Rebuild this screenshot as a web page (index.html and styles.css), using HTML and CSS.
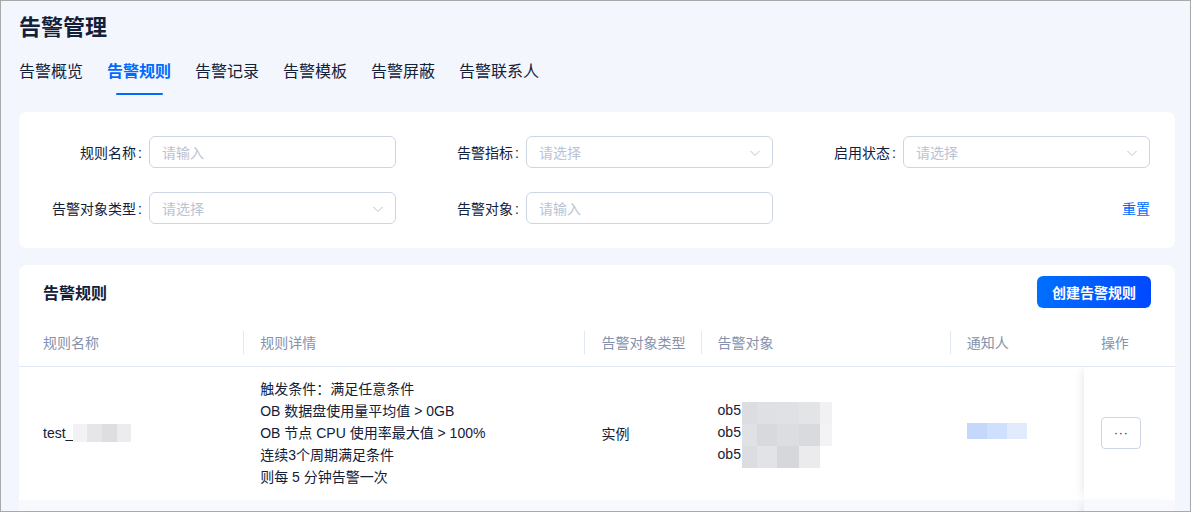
FILE: index.html
```html
<!DOCTYPE html>
<html lang="zh-CN">
<head>
<meta charset="utf-8">
<title>告警管理</title>
<link rel="stylesheet" href="styles.css">
</head>
<body>
<div class="frame">
  <header class="page-head">
    <h1 class="page-title">告警管理</h1>
    <nav class="tabs">
      <a class="tab">告警概览</a>
      <a class="tab active">告警规则</a>
      <a class="tab">告警记录</a>
      <a class="tab">告警模板</a>
      <a class="tab">告警屏蔽</a>
      <a class="tab">告警联系人</a>
    </nav>
  </header>

  <section class="card filter">
    <div class="field">
      <label class="field-label">规则名称</label>
      <div class="control"><span class="placeholder">请输入</span></div>
    </div>
    <div class="field">
      <label class="field-label">告警指标</label>
      <div class="control select"><span class="placeholder">请选择</span>
        <svg class="arrow" viewBox="0 0 12 12"><path d="M1.5 4l4.5 4.5L10.5 4" fill="none" stroke="currentColor" stroke-width="1"/></svg>
      </div>
    </div>
    <div class="field">
      <label class="field-label">启用状态</label>
      <div class="control select"><span class="placeholder">请选择</span>
        <svg class="arrow" viewBox="0 0 12 12"><path d="M1.5 4l4.5 4.5L10.5 4" fill="none" stroke="currentColor" stroke-width="1"/></svg>
      </div>
    </div>
    <div class="field">
      <label class="field-label">告警对象类型</label>
      <div class="control select"><span class="placeholder">请选择</span>
        <svg class="arrow" viewBox="0 0 12 12"><path d="M1.5 4l4.5 4.5L10.5 4" fill="none" stroke="currentColor" stroke-width="1"/></svg>
      </div>
    </div>
    <div class="field">
      <label class="field-label">告警对象</label>
      <div class="control"><span class="placeholder">请输入</span></div>
    </div>
    <div class="field actions">
      <a class="link">重置</a>
    </div>
  </section>

  <section class="card rules">
    <div class="rules-head">
      <h2 class="rules-title">告警规则</h2>
      <button class="btn-primary">创建告警规则</button>
    </div>
    <table class="table">
      <colgroup>
        <col class="c-name"><col class="c-detail"><col class="c-type"><col class="c-target"><col class="c-notify"><col class="c-op">
      </colgroup>
      <thead>
        <tr>
          <th class="first sep">规则名称</th>
          <th class="sep">规则详情</th>
          <th class="sep">告警对象类型</th>
          <th class="sep">告警对象</th>
          <th>通知人</th>
          <th class="op">操作</th>
        </tr>
      </thead>
      <tbody>
        <tr>
          <td class="first">
            <span class="name">test_<span class="mosaic m-name"><i></i><i></i><i></i><i></i></span></span>
          </td>
          <td>
            <div class="detail">
              <div>触发条件：满足任意条件</div>
              <div>OB 数据盘使用量平均值 &gt; 0GB</div>
              <div>OB 节点 CPU 使用率最大值 &gt; 100%</div>
              <div>连续3个周期满足条件</div>
              <div>则每 5 分钟告警一次</div>
            </div>
          </td>
          <td>实例</td>
          <td>
            <div class="targets">
              <div class="target">ob5<span class="mosaic m-a"><i></i><i></i><i></i><i></i><i></i></span></div>
              <div class="target">ob5<span class="mosaic m-b"><i></i><i></i><i></i><i></i><i></i></span></div>
              <div class="target">ob5<span class="mosaic m-c"><i></i><i></i><i></i><i></i></span></div>
            </div>
          </td>
          <td><span class="mosaic m-user"><i></i><i></i><i></i></span></td>
          <td class="op"><button class="btn-more">···</button></td>
        </tr>
        <tr class="stub">
          <td class="first"></td><td></td><td></td><td></td><td></td><td class="op"></td>
        </tr>
      </tbody>
    </table>
  </section>
</div>
</body>
</html>
```

FILE: styles.css
```css
* { box-sizing: border-box; }

html, body {
  margin: 0;
  padding: 0;
}

body {
  font-family: "Liberation Sans", "Noto Sans CJK SC", sans-serif;
  color: #132039;
  font-size: 14px;
}

.frame {
  width: 1191px;
  height: 512px;
  overflow: hidden;
  border: 1px solid #a9a9a9;
  background: #f3f6fc;
  padding: 0 15px 0 18px;
}

/* page header */
.page-head {
  padding-top: 11px;
}

.page-title {
  margin: 0;
  font-size: 22px;
  line-height: 32px;
  font-weight: 700;
  color: #132039;
}

.tabs {
  display: flex;
  gap: 24px;
  margin-top: 16px;
  height: 45px;
}

.tab {
  position: relative;
  font-size: 16px;
  line-height: 24px;
  color: #132039;
  cursor: pointer;
}

.tab.active {
  color: #006aff;
  font-weight: 700;
}

.tab.active::after {
  content: "";
  position: absolute;
  left: 9px;
  right: 8px;
  top: 33px;
  height: 2px;
  background: #006aff;
  border-radius: 1px;
}

/* cards */
.card {
  background: #fff;
  border-radius: 8px;
  margin-top: 7px;
}

.filter {
  display: grid;
  grid-template-columns: repeat(3, 353px);
  column-gap: 24px;
  row-gap: 24px;
  padding: 24px;
}

.field {
  display: grid;
  grid-template-columns: 106px 1fr;
  align-items: center;
  height: 32px;
}

.field-label {
  text-align: right;
  padding-right: 7px;
  font-size: 14px;
  color: #132039;
  white-space: nowrap;
}

.field-label::after {
  content: ":";
  margin-left: 2px;
}

.control {
  position: relative;
  height: 32px;
  border: 1px solid #cdd5e4;
  border-radius: 6px;
  padding: 0 12px;
  display: flex;
  align-items: center;
}

.placeholder {
  color: #bac3d4;
  font-size: 14px;
}

.arrow {
  position: absolute;
  right: 11px;
  top: 10px;
  width: 12px;
  height: 12px;
  color: #bac3d4;
}

.actions {
  display: flex;
  justify-content: flex-end;
}

.link {
  color: #006aff;
  font-size: 14px;
  cursor: pointer;
}

/* rules table */
.rules {
  margin-top: 17px;
  padding-top: 11px;
  height: 260px;
  overflow: hidden;
}

.rules-head {
  display: flex;
  justify-content: space-between;
  align-items: center;
  padding: 0 24px;
  height: 32px;
}

.rules-title {
  margin: 0;
  font-size: 16px;
  font-weight: 700;
  color: #132039;
}

.btn-primary {
  height: 32px;
  padding: 0 15px;
  border: none;
  border-radius: 6px;
  background: linear-gradient(90deg, #0070ff 0%, #0048ff 100%);
  color: #fff;
  font-family: inherit;
  font-size: 14px;
  font-weight: 700;
}

.table {
  width: 100%;
  margin-top: 11px;
  border-collapse: collapse;
  table-layout: fixed;
}

.c-name { width: 225px; }
.c-detail { width: 341px; }
.c-type { width: 116px; }
.c-target { width: 249px; }
.c-notify { width: 133px; }
.c-op { width: 91px; }

.table th {
  position: relative;
  height: 47px;
  padding: 0 16px;
  text-align: left;
  font-weight: 400;
  font-size: 14px;
  color: #8592ad;
  background: #fff;
  border-bottom: 1px solid #e2e8f3;
  white-space: nowrap;
}

.table th.sep::after {
  content: "";
  position: absolute;
  right: 0;
  top: 12px;
  height: 23px;
  width: 1px;
  background: #e2e8f3;
}

.table .first { padding-left: 24px; }

.table td {
  padding: 11px 16px 12px;
  vertical-align: middle;
  font-size: 14px;
  color: #132039;
}

.table .op {
  padding-left: 17px;
  box-shadow: -6px 0 8px -4px rgba(40, 60, 100, 0.1);
}

.detail {
  line-height: 22px;
}

.name {
  display: inline-flex;
  align-items: center;
}

.targets {
  display: flex;
  flex-direction: column;
  gap: 1px;
}

.target {
  display: flex;
  align-items: center;
  line-height: 21px;
  height: 21px;
}

/* masked values */
.mosaic {
  display: inline-flex;
  height: 18px;
  flex-shrink: 0;
}

.mosaic i {
  display: block;
  width: 15px;
  height: 100%;
  flex-shrink: 0;
}

.m-name i:nth-child(1) { background: #f2f2f4; width: 14px; }
.m-name i:nth-child(2) { background: #e6e6e9; }
.m-name i:nth-child(3) { background: #dedee1; }
.m-name i:nth-child(4) { background: #ececee; width: 14px; }

.m-a, .m-b, .m-c { margin-left: 1px; }
.m-a i, .m-b i, .m-c i { height: 22px; }
.m-a i:nth-child(1), .m-b i:nth-child(1), .m-c i:nth-child(1) { width: 15px; }
.m-a i:nth-child(2), .m-b i:nth-child(2), .m-c i:nth-child(2) { width: 20px; }
.m-a i:nth-child(3), .m-b i:nth-child(3), .m-c i:nth-child(3) { width: 22px; }
.m-a i:nth-child(4), .m-b i:nth-child(4), .m-c i:nth-child(4) { width: 21px; }
.m-a i:nth-child(5), .m-b i:nth-child(5) { width: 12px; }

.m-a i:nth-child(1) { background: #dcdde0; }
.m-a i:nth-child(2) { background: #dfe0e3; }
.m-a i:nth-child(3) { background: #e0e1e4; }
.m-a i:nth-child(4) { background: #e3e4e6; }
.m-a i:nth-child(5) { background: #f1f1f3; }
.m-b i:nth-child(1) { background: #e0e1e4; }
.m-b i:nth-child(2) { background: #d8d9dc; }
.m-b i:nth-child(3) { background: #dcdde0; }
.m-b i:nth-child(4) { background: #d9dadd; }
.m-b i:nth-child(5) { background: #f3f3f5; }
.m-c i:nth-child(1) { background: #dcdde0; }
.m-c i:nth-child(2) { background: #e2e3e6; }
.m-c i:nth-child(3) { background: #d6d7da; }
.m-c i:nth-child(4) { background: #ebebed; }

.m-user { height: 16px; }
.m-user i { width: 20px; }
.m-user i:nth-child(1) { background: #c5d8fb; }
.m-user i:nth-child(2) { background: #d0dffb; }
.m-user i:nth-child(3) { background: #e2ebfc; }

.btn-more {
  width: 40px;
  height: 32px;
  border: 1px solid #cdd5e4;
  border-radius: 4px;
  background: #fff;
  color: #132039;
  font-family: inherit;
  font-size: 12px;
  letter-spacing: 1px;
  padding: 0 0 0 1px;
  line-height: 1;
}

.stub td {
  height: 40px;
  background: #f7f9fd;
  padding: 0;
}
```
